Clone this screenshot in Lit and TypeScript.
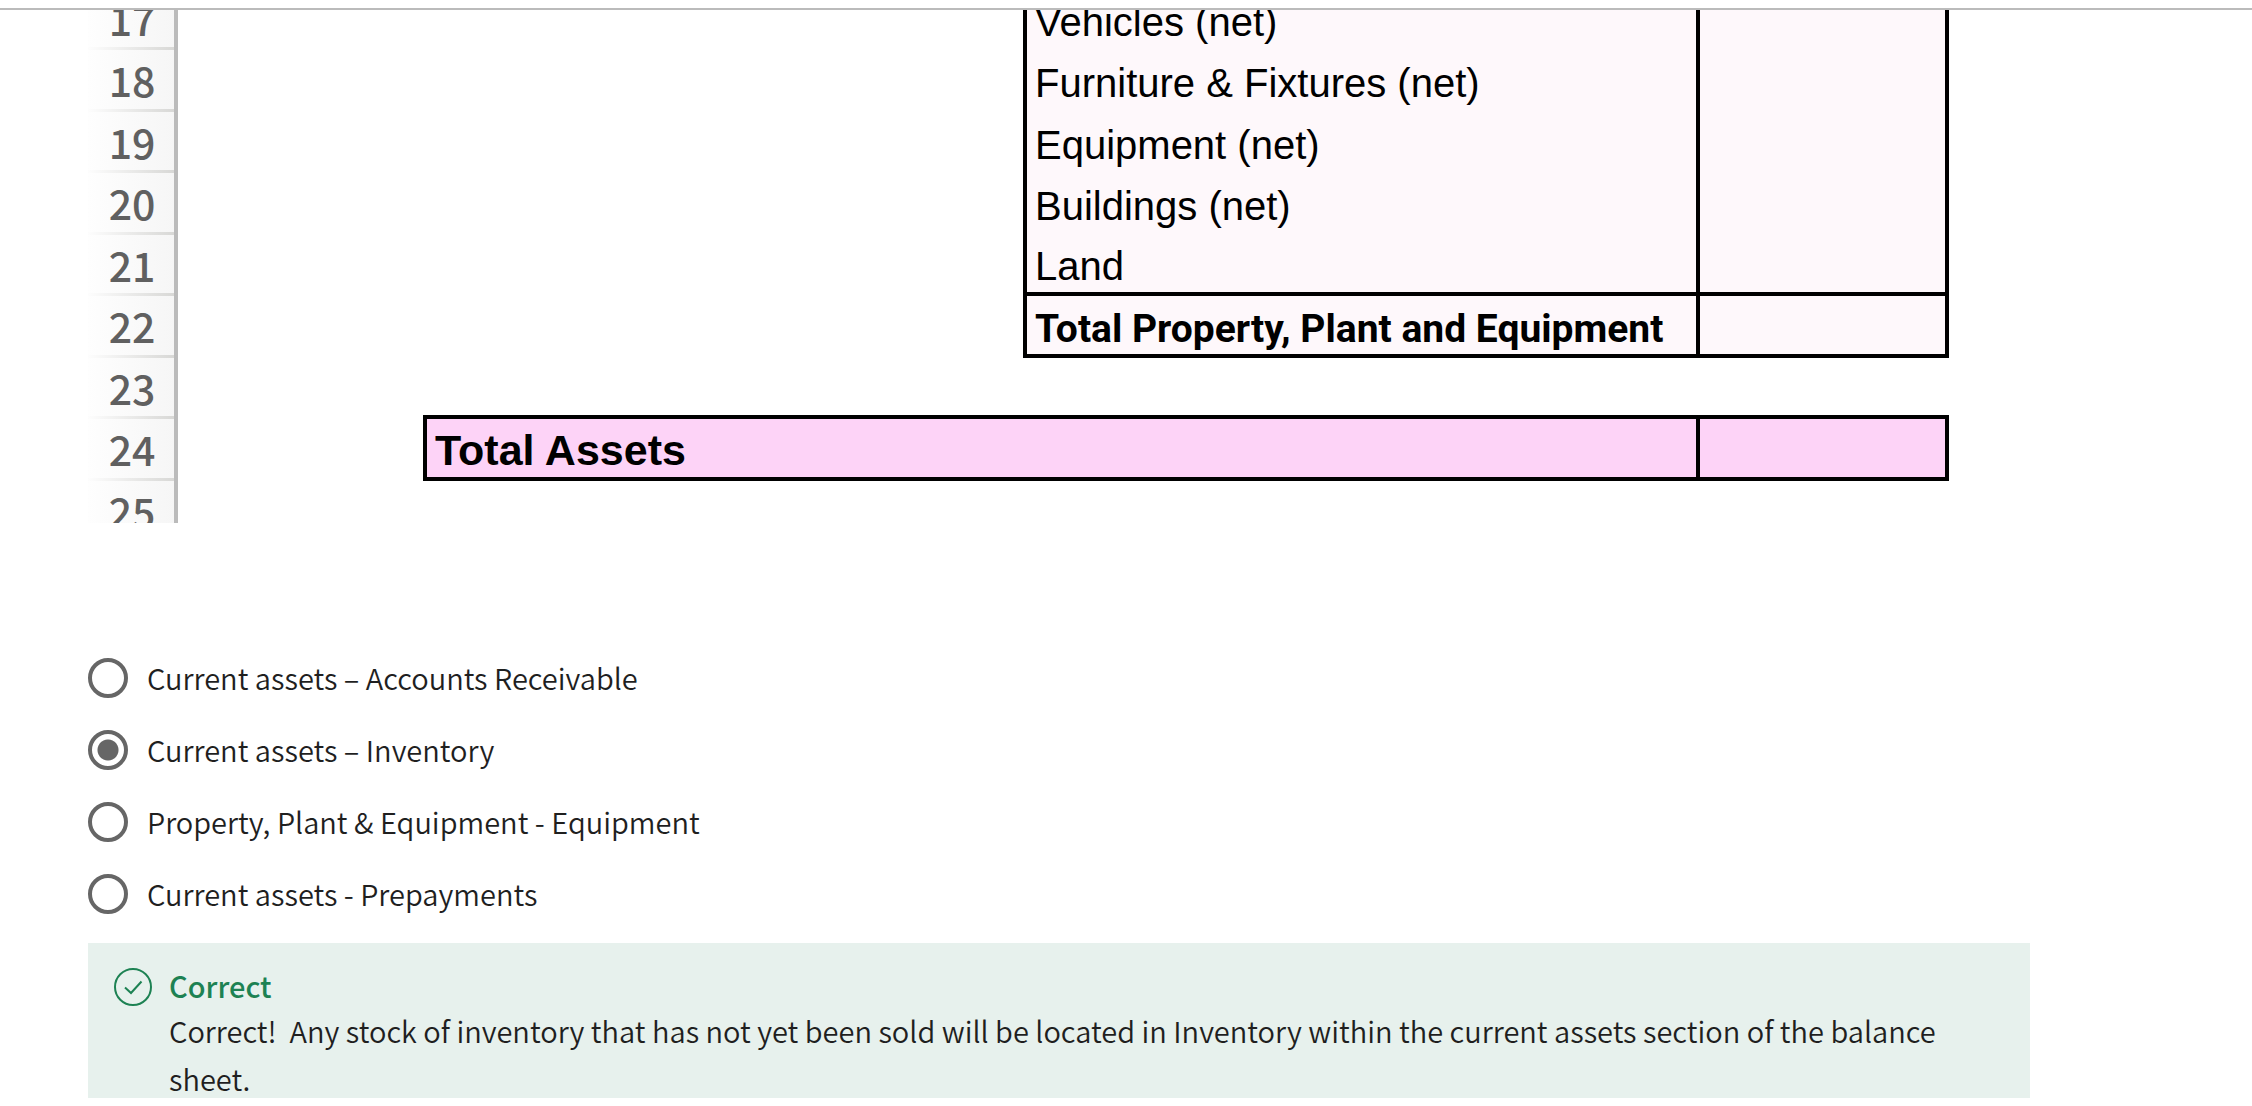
import { LitElement, html, css, nothing } from "lit";
import { customElement, state } from "lit/decorators.js";

interface SheetRow {
  n: number;
  label?: string;
  kind: "item" | "last" | "subtotal" | "blank" | "above" | "total";
}

const ROWS: SheetRow[] = [
  { n: 17, label: "Vehicles (net)", kind: "item" },
  { n: 18, label: "Furniture & Fixtures (net)", kind: "item" },
  { n: 19, label: "Equipment (net)", kind: "item" },
  { n: 20, label: "Buildings (net)", kind: "item" },
  { n: 21, label: "Land", kind: "last" },
  { n: 22, label: "Total Property, Plant and Equipment", kind: "subtotal" },
  { n: 23, kind: "above" },
  { n: 24, label: "Total Assets", kind: "total" },
  { n: 25, kind: "blank" },
];

// Relative widths: row number, two indent columns, label, amount, remainder.
const COLUMNS = [90, 245, 600, 677, 249, 81];
const COLUMN_SUM = COLUMNS.reduce((a, b) => a + b, 0);

@customElement("balance-sheet")
export class BalanceSheet extends LitElement {
  static styles = css`
    :host {
      display: block;
      overflow: hidden;
    }
    .sheet {
      width: 100%;
      margin: -21px 0 -19px;
      table-layout: fixed;
      border-collapse: separate;
      border-spacing: 0;
      font-family: "Liberation Sans", Arial, sans-serif;
      font-size: 40px;
      line-height: 48px;
      color: #000;
    }
    tr {
      height: 61px;
    }
    tr:nth-child(even) {
      height: 62px;
    }
    th,
    td {
      box-sizing: border-box;
      padding: 4px 0 0;
      text-align: left;
      vertical-align: middle;
      white-space: nowrap;
      font-weight: 400;
    }
    .num {
      padding: 0 0 4px 2px;
      border-right: 4px solid #bbb;
      background:
        linear-gradient(90deg, #fdfdfd, #d8d8d6) bottom / 100% 3px no-repeat,
        linear-gradient(90deg, #fefefe, #f6f6f6);
      font-family: "Noto Sans CJK SC", sans-serif;
      font-size: 41px;
      font-weight: 500;
      text-align: center;
      color: #606060;
    }
    .label,
    .amount {
      border-right: 4px solid #000;
      background: #fef8fb;
    }
    .label {
      border-left: 4px solid #000;
      padding-left: 8px;
    }
    .last .label,
    .last .amount,
    .subtotal .label,
    .subtotal .amount,
    .total .label,
    .total .amount,
    .rule {
      border-bottom: 4px solid #000;
    }
    .subtotal .label {
      padding-top: 8px;
      font-family: Roboto, "Liberation Sans", sans-serif;
      font-weight: 700;
      font-size: 39px;
    }
    .total .label {
      font-weight: 700;
      font-size: 43px;
    }
    .total .label,
    .total .amount {
      background: #fdd3f7;
    }
  `;

  private cells(row: SheetRow) {
    switch (row.kind) {
      case "blank":
        return html`<td colspan="5"></td>`;
      case "above":
        return html`<td></td>
          <td class="rule" colspan="3"></td>
          <td></td>`;
      case "total":
        return html`<td></td>
          <td class="label" colspan="2">${row.label}</td>
          <td class="amount"></td>
          <td></td>`;
      default:
        return html`<td colspan="2"></td>
          <td class="label">${row.label}</td>
          <td class="amount"></td>
          <td></td>`;
    }
  }

  render() {
    return html`<table class="sheet">
      <colgroup>
        ${COLUMNS.map((w) => html`<col style="width:${(w / COLUMN_SUM) * 100}%" />`)}
      </colgroup>
      <tbody>
        ${ROWS.map(
          (row) => html`<tr class=${row.kind}>
            <th class="num" scope="row">${row.n}</th>
            ${this.cells(row)}
          </tr>`
        )}
      </tbody>
    </table>`;
  }
}

const OPTIONS = [
  "Current assets – Accounts Receivable",
  "Current assets – Inventory",
  "Property, Plant & Equipment - Equipment",
  "Current assets - Prepayments",
];
const ANSWER = 1;

@customElement("app-root")
export class AppRoot extends LitElement {
  static styles = css`
    :host {
      display: flex;
      flex-direction: column;
      box-sizing: border-box;
      height: 100vh;
      padding: 8px 0;
      background: #fff;
      color: #1f1f1f;
      font-family: "Noto Sans CJK SC", "Open Sans", sans-serif;
      font-size: 29px;
      font-weight: 350;
      line-height: 48px;
    }
    .content {
      flex: 1;
      min-height: 0;
      overflow: hidden;
      padding: 0 222px 0 88px;
      border-top: 2px solid #bbb;
    }
    .options {
      margin: 119px 0 13px;
      padding: 0;
      border: 0;
    }
    .option {
      display: flex;
      align-items: center;
      gap: 19px;
      height: 72px;
    }
    .caption {
      padding-bottom: 3px;
    }
    .radio {
      appearance: none;
      box-sizing: border-box;
      flex: none;
      width: 40px;
      height: 40px;
      margin: 0;
      border: 4px solid #666;
      border-radius: 50%;
      background: #fff;
    }
    .radio:checked {
      background: radial-gradient(circle, #666 10px, #fff 11px);
    }
    .feedback {
      display: flex;
      gap: 17px;
      padding: 21px 64px 24px 26px;
      background: #e7f1ed;
    }
    .icon {
      flex: none;
      width: 38px;
      height: 38px;
      margin-top: 4px;
    }
    .title {
      margin: 0;
      font-size: 29px;
      font-weight: 500;
      line-height: 42px;
      color: #1d8253;
    }
    .text {
      margin: 0;
    }
  `;

  @state() private selected = ANSWER;

  render() {
    return html`
      <main class="content">
        <balance-sheet></balance-sheet>
        <fieldset class="options">
          ${OPTIONS.map(
            (text, i) => html`<label class="option">
              <input
                class="radio"
                type="radio"
                name="answer"
                .checked=${this.selected === i}
                @change=${() => (this.selected = i)}
              />
              <span class="caption">${text}</span>
            </label>`
          )}
        </fieldset>
        ${this.selected === ANSWER
          ? html`<section class="feedback">
              <svg class="icon" viewBox="0 0 38 38" fill="none" stroke="#1d8253" stroke-width="2" aria-hidden="true">
                <circle cx="19" cy="19" r="18" />
                <path d="M11 19.5 17 25 27.5 13.5" />
              </svg>
              <div>
                <h2 class="title">Correct</h2>
                <p class="text">
                  Correct!&nbsp; Any stock of inventory that has not yet been sold will be located in
                  Inventory within the current assets section of the balance sheet.
                </p>
              </div>
            </section>`
          : nothing}
      </main>
    `;
  }
}
